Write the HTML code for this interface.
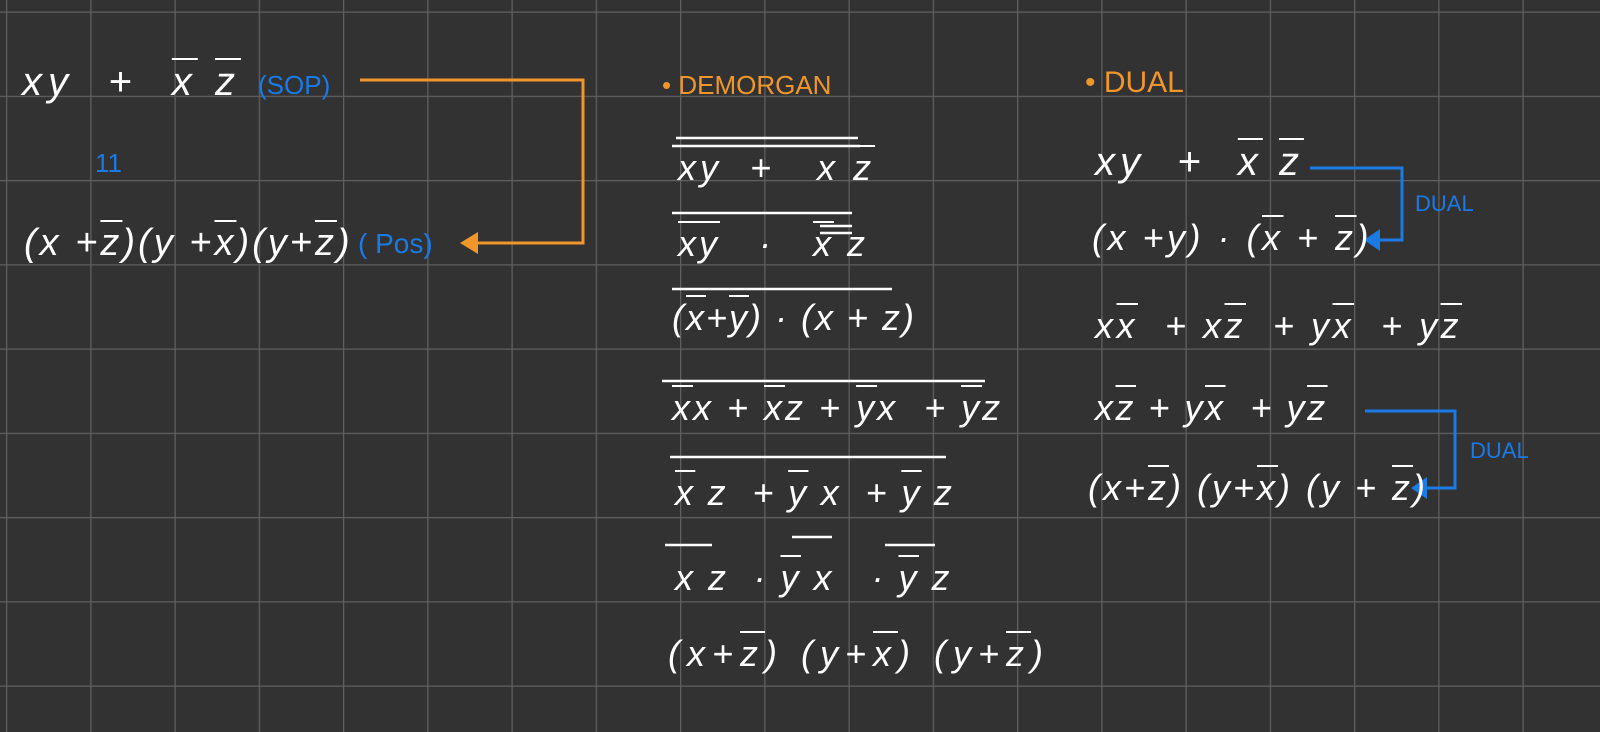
<!DOCTYPE html>
<html><head><meta charset="utf-8"><style>
html,body{margin:0;padding:0;}
body{width:1600px;height:732px;overflow:hidden;background:#323232;position:relative;
font-family:"Liberation Sans",sans-serif;}
.t{position:absolute;color:#fff;font-style:italic;font-size:36px;white-space:pre;line-height:1;}
.o{text-decoration:overline;text-decoration-thickness:2px;}
.b{color:#1a7ae6;font-style:normal;}
.or{color:#f0962a;font-style:normal;}
svg{position:absolute;left:0;top:0;}
</style></head><body>
<svg width="1600" height="732">
<defs><pattern id="g" x="6" y="11.5" width="84.25" height="84.25" patternUnits="userSpaceOnUse">
<path d="M0 0H84.25M0 0V84.25" stroke="#606060" stroke-width="2.5" fill="none"/></pattern></defs>
<rect width="1600" height="732" fill="url(#g)"/>
<g stroke="#f0962a" stroke-width="3" fill="none">
<path d="M360 80H583V243H475"/></g>
<path d="M460 243L478 232L478 254Z" fill="#f0962a"/>
<g stroke="#1a7ae6" stroke-width="3" fill="none">
<path d="M1310 168H1402V240H1378"/><path d="M1365 411H1455V488H1425"/></g>
<path d="M1364 240L1380 229L1380 251Z" fill="#1a7ae6"/>
<path d="M1411 488L1427 477L1427 499Z" fill="#1a7ae6"/>
<g stroke="#fff" stroke-width="2.5">
<path d="M676 138H858M672 146H860"/>
<path d="M672 213H852M820 226H852M820 233H852"/>
<path d="M672 289H892"/>
<path d="M662 381H985"/>
<path d="M670 457H946"/>
<path d="M665 545H712M792 537H832M885 545H935"/>
</g>
</svg>
<div class="t" style="left:22px;top:62px;font-size:40px;letter-spacing:6px">xy  +  <span class="o">x</span> <span class="o">z</span></div>
<div class="t b" style="left:258px;top:72px;font-size:26px">(SOP)</div>
<div class="t b" style="left:95px;top:150px;font-size:26px">11</div>
<div class="t" style="left:24px;top:224px;font-size:38px;letter-spacing:3px">(x +<span class="o">z</span>)(y +<span class="o">x</span>)(y+<span class="o">z</span>)</div>
<div class="t b" style="left:358px;top:230px;font-size:28px">( Pos)</div>

<div class="t or" style="left:662px;top:72px;font-size:26px">• DEMORGAN</div>
<div class="t or" style="left:1085px;top:68px;font-size:30px">• DUAL</div>

<div class="t" style="left:678px;top:150px;letter-spacing:4px">xy  +   <span class="o">x</span> <span class="o">z</span></div>
<div class="t" style="left:678px;top:226px;letter-spacing:3px"><span class="o">xy</span>   ·   <span class="o">x</span> z</div>
<div class="t" style="left:672px;top:300px;letter-spacing:2px">(<span class="o">x</span>+<span class="o">y</span>) · (x + z)</div>
<div class="t" style="left:672px;top:390px;letter-spacing:3px"><span class="o">x</span>x + <span class="o">x</span>z + <span class="o">y</span>x  + <span class="o">y</span>z</div>
<div class="t" style="left:675px;top:475px;letter-spacing:2.3px"><span class="o">x</span> z  + <span class="o">y</span> x  + <span class="o">y</span> z</div>
<div class="t" style="left:675px;top:560px;letter-spacing:2.5px">x z  · <span class="o">y</span> x   · <span class="o">y</span> z</div>
<div class="t" style="left:668px;top:636px;letter-spacing:7px">(x+<span class="o">z</span>) (y+<span class="o">x</span>) (y+<span class="o">z</span>)</div>

<div class="t" style="left:1095px;top:142px;font-size:40px;letter-spacing:5px">xy  +  <span class="o">x</span> <span class="o">z</span></div>
<div class="t" style="left:1092px;top:220px;letter-spacing:3.5px">(x +y) · (<span class="o">x</span> + <span class="o">z</span>)</div>
<div class="t" style="left:1095px;top:308px;letter-spacing:3.5px">x<span class="o">x</span>  + x<span class="o">z</span>  + y<span class="o">x</span>  + y<span class="o">z</span></div>
<div class="t" style="left:1095px;top:390px;letter-spacing:2.5px">x<span class="o">z</span> + y<span class="o">x</span>  + y<span class="o">z</span></div>
<div class="t" style="left:1088px;top:470px;letter-spacing:3px">(x+<span class="o">z</span>) (y+<span class="o">x</span>) (y + <span class="o">z</span>)</div>
<div class="t b" style="left:1415px;top:193px;font-size:22px">DUAL</div>
<div class="t b" style="left:1470px;top:440px;font-size:22px">DUAL</div>
</body></html>
